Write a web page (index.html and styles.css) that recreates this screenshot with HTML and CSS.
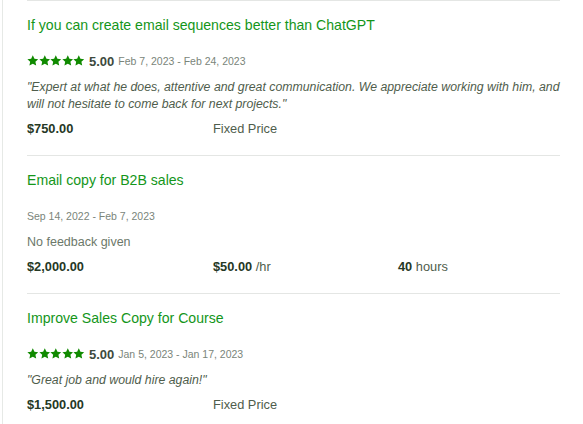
FILE: index.html
```html
<!DOCTYPE html>
<html>
<head>
<meta charset="utf-8">
<link rel="stylesheet" href="styles.css">
</head>
<body>
<div class="panel">
  <div class="item">
    <div class="title">If you can create email sequences better than ChatGPT</div>
    <div class="meta">
      <span class="stars">
        <svg viewBox="0 0 12 12"><path d="M6 .3l1.7 3.6 3.9.4-2.9 2.7.8 3.9L6 9 2.5 10.9l.8-3.9L.4 4.3l3.9-.4z"/></svg><svg viewBox="0 0 12 12"><path d="M6 .3l1.7 3.6 3.9.4-2.9 2.7.8 3.9L6 9 2.5 10.9l.8-3.9L.4 4.3l3.9-.4z"/></svg><svg viewBox="0 0 12 12"><path d="M6 .3l1.7 3.6 3.9.4-2.9 2.7.8 3.9L6 9 2.5 10.9l.8-3.9L.4 4.3l3.9-.4z"/></svg><svg viewBox="0 0 12 12"><path d="M6 .3l1.7 3.6 3.9.4-2.9 2.7.8 3.9L6 9 2.5 10.9l.8-3.9L.4 4.3l3.9-.4z"/></svg><svg viewBox="0 0 12 12"><path d="M6 .3l1.7 3.6 3.9.4-2.9 2.7.8 3.9L6 9 2.5 10.9l.8-3.9L.4 4.3l3.9-.4z"/></svg>
      </span>
      <span class="score">5.00</span>
      <span class="dates">Feb 7, 2023 - Feb 24, 2023</span>
    </div>
    <div class="quote">"Expert at what he does, attentive and great communication. We appreciate working with him, and will not hesitate to come back for next projects."</div>
    <div class="nums">
      <span class="amount">$750.00</span>
      <span class="kind">Fixed Price</span>
      <span></span>
    </div>
  </div>

  <div class="item">
    <div class="title">Email copy for B2B sales</div>
    <div class="meta">
      <span class="dates">Sep 14, 2022 - Feb 7, 2023</span>
    </div>
    <div class="nofeedback">No feedback given</div>
    <div class="nums">
      <span class="amount">$2,000.00</span>
      <span class="amount">$50.00 <span class="unit">/hr</span></span>
      <span class="amount">40 <span class="unit">hours</span></span>
    </div>
  </div>

  <div class="item">
    <div class="title">Improve Sales Copy for Course</div>
    <div class="meta">
      <span class="stars">
        <svg viewBox="0 0 12 12"><path d="M6 .3l1.7 3.6 3.9.4-2.9 2.7.8 3.9L6 9 2.5 10.9l.8-3.9L.4 4.3l3.9-.4z"/></svg><svg viewBox="0 0 12 12"><path d="M6 .3l1.7 3.6 3.9.4-2.9 2.7.8 3.9L6 9 2.5 10.9l.8-3.9L.4 4.3l3.9-.4z"/></svg><svg viewBox="0 0 12 12"><path d="M6 .3l1.7 3.6 3.9.4-2.9 2.7.8 3.9L6 9 2.5 10.9l.8-3.9L.4 4.3l3.9-.4z"/></svg><svg viewBox="0 0 12 12"><path d="M6 .3l1.7 3.6 3.9.4-2.9 2.7.8 3.9L6 9 2.5 10.9l.8-3.9L.4 4.3l3.9-.4z"/></svg><svg viewBox="0 0 12 12"><path d="M6 .3l1.7 3.6 3.9.4-2.9 2.7.8 3.9L6 9 2.5 10.9l.8-3.9L.4 4.3l3.9-.4z"/></svg>
      </span>
      <span class="score">5.00</span>
      <span class="dates">Jan 5, 2023 - Jan 17, 2023</span>
    </div>
    <div class="quote">"Great job and would hire again!"</div>
    <div class="nums">
      <span class="amount">$1,500.00</span>
      <span class="kind">Fixed Price</span>
      <span></span>
    </div>
  </div>
</div>
</body>
</html>
```
FILE: styles.css
```css
html, body {
  margin: 0;
  padding: 0;
  background: #ffffff;
}
body {
  font-family: "Liberation Sans", Arial, sans-serif;
  color: #001e00;
}
.panel {
  margin-left: 2px;
  border-left: 1px solid #e6e9e6;
  padding-left: 24px;
  min-height: 424px;
}
.item {
  width: 533px;
  border-top: 1px solid #e4e6e4;
  padding: 13px 0 17px;
}
.title {
  font-size: 14.1px;
  line-height: 22px;
  color: #14961a;
}
.meta {
  margin-top: 16px;
  height: 18px;
  display: flex;
  align-items: center;
  gap: 4px;
}
.stars {
  display: flex;
  gap: 0;
}
.stars svg {
  width: 11.6px;
  height: 11.6px;
  fill: #108a00;
}
.score {
  font-size: 13px;
  font-weight: bold;
  color: #3d4a3d;
}
.dates {
  font-size: 10.5px;
  color: #7a857a;
}
.quote {
  margin-top: 9px;
  font-size: 12.3px;
  line-height: 17px;
  font-style: italic;
  color: #4f5d4c;
}
.nofeedback {
  margin-top: 9px;
  font-size: 12.5px;
  line-height: 17px;
  color: #6c786a;
}
.nums {
  margin-top: 7px;
  display: grid;
  grid-template-columns: 186px 185px 1fr;
  line-height: 18px;
  font-size: 12.8px;
}
.amount {
  font-weight: bold;
  color: #253825;
}
.unit {
  font-weight: normal;
  color: #4f5d4c;
}
.kind {
  color: #4f5d4c;
}
```
